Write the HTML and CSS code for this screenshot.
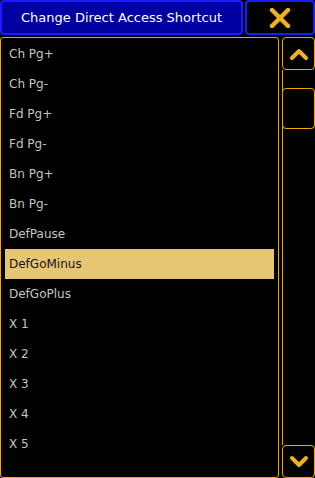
FILE: index.html
```html
<!DOCTYPE html>
<html lang="en">
<head>
    <meta charset="UTF-8">
    <title>Change Direct Access Shortcut</title>
    <link rel="stylesheet" href="styles.css">
</head>
<body>
    <header class="top">
        <div class="title">Change Direct Access Shortcut</div>
        <button class="close" aria-label="Close">
            <svg width="22" height="20" viewBox="0 0 22 20">
                <path d="M3 2 L19 18 M19 2 L3 18" stroke="#f0b020" stroke-width="4.5" stroke-linecap="round"/>
            </svg>
        </button>
    </header>

    <section class="body">
        <ul class="list">
            <li>Ch Pg+</li>
            <li>Ch Pg-</li>
            <li>Fd Pg+</li>
            <li>Fd Pg-</li>
            <li>Bn Pg+</li>
            <li>Bn Pg-</li>
            <li>DefPause</li>
            <li class="selected">DefGoMinus</li>
            <li>DefGoPlus</li>
            <li>X 1</li>
            <li>X 2</li>
            <li>X 3</li>
            <li>X 4</li>
            <li>X 5</li>
        </ul>

        <aside class="scroll">
            <button class="arrow">
                <svg width="22" height="14" viewBox="0 0 22 14">
                    <path d="M4 11 L11 4 L18 11" fill="none" stroke="#f0b020" stroke-width="4" stroke-linecap="round" stroke-linejoin="round"/>
                </svg>
            </button>
            <div class="track">
                <div class="thumb"></div>
            </div>
            <button class="arrow">
                <svg width="22" height="14" viewBox="0 0 22 14">
                    <path d="M4 3 L11 10 L18 3" fill="none" stroke="#f0b020" stroke-width="4" stroke-linecap="round" stroke-linejoin="round"/>
                </svg>
            </button>
        </aside>
    </section>
</body>
</html>
```

FILE: styles.css
```css
html{
    box-sizing: border-box;
    font-family: "DejaVu Sans", sans-serif;
    font-size: 12px;
}

*, *::after, *::before{
    box-sizing: inherit;
}

body{
    display: flex;
    flex-direction: column;
    width: 315px;
    height: 478px;
    margin: 0;
    background-color: #000;
    overflow: hidden;
}

.top{
    display: flex;
    gap: 2px;
    height: 35px;
}

.title{
    width: 243px;
    display: flex;
    align-items: center;
    justify-content: center;
    background-color: #0000a0;
    border: 2px solid #1a1aff;
    border-radius: 4px;
    color: #fff;
    font-size: 13px;
}

.close{
    flex-grow: 1;
    display: flex;
    align-items: center;
    justify-content: center;
    margin: 0;
    padding: 0;
    background-color: #000;
    border: 2px solid #1a1aff;
    border-radius: 4px;
}

.body{
    flex-grow: 1;
    display: flex;
    gap: 3px;
    margin-top: 2px;
}

.list{
    width: 279px;
    margin: 0;
    padding: 1px 4px;
    list-style: none;
    border: 1px solid #f0a800;
    border-radius: 3px;
}

.list li{
    height: 30px;
    line-height: 31px;
    padding-left: 4px;
    color: #c4c4c4;
}

.list li.selected{
    background-color: #e6c673;
    color: #141414;
}

.scroll{
    flex-grow: 1;
    display: flex;
    flex-direction: column;
}

.arrow{
    height: 33px;
    margin: 0;
    padding: 0;
    display: flex;
    align-items: center;
    justify-content: center;
    background-color: #000;
    border: 1px solid #f0a800;
    border-radius: 4px;
}

.track{
    flex-grow: 1;
    border-left: 1px solid #f0a800;
    padding-top: 18px;
}

.thumb{
    height: 41px;
    margin-left: -1px;
    border: 1px solid #f0a800;
    border-radius: 4px;
}
```
